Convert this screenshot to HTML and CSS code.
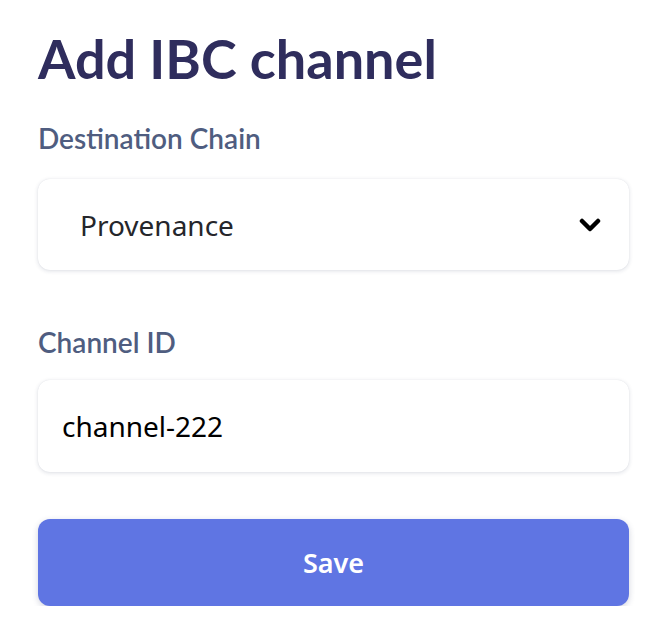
FILE: index.html
```html
<!DOCTYPE html>
<html>
<head>
<meta charset="utf-8">
<link rel="stylesheet" href="styles.css">
</head>
<body>
<main class="form">
  <h1 class="title">Add IBC channel</h1>
  <label class="label">Destination Chain</label>
  <div class="select">
    <span class="select-value">Provenance</span>
    <svg class="chevron" width="22" height="14" viewBox="0 0 22 14"><path d="M3 3 L11 11 L19 3" fill="none" stroke="#000" stroke-width="4.5" stroke-linecap="round" stroke-linejoin="round"/></svg>
  </div>
  <label class="label label-gap">Channel ID</label>
  <div class="input">channel-222</div>
  <button class="save">Save</button>
</main>
</body>
</html>
```
FILE: styles.css
```css
html, body { margin: 0; padding: 0; background: #fff; }
.form {
  width: 591px;
  margin-left: 38px;
  display: flex;
  flex-direction: column;
  font-family: "Lato", "Noto Sans", sans-serif;
}
.title {
  margin: 24px 0 0;
  font-size: 54px;
  font-weight: 700;
  line-height: 70px;
  color: #2f2d5d;
  letter-spacing: 0;
}
.label {
  margin-top: 29px;
  font-size: 28px;
  font-weight: 600;
  line-height: 30px;
  color: #4f5d80;
}
.label-gap { margin-top: 57px; }
.select, .input {
  margin-top: 26px;
  height: 91px;
  box-sizing: border-box;
  border-radius: 12px;
  background: #fff;
  box-shadow: 0 1px 4px rgba(30, 40, 80, 0.15), 0 0 1px rgba(30,40,80,0.1);
  display: flex;
  align-items: center;
  font-family: "Noto Sans", sans-serif;
  font-size: 28px;
}
.select { padding: 0 28px 0 42px; justify-content: space-between; color: #25262b; }
.input { margin-top: 23px; height: 92px; padding-left: 24px; color: #000; }
.chevron { display: block; }
.save {
  margin-top: 47px;
  height: 87px;
  border: none;
  border-radius: 12px;
  background: #5f75e3;
  color: #fff;
  font-family: "Noto Sans", sans-serif;
  font-size: 27px;
  font-weight: 600;
  box-shadow: 0 2px 6px rgba(30, 40, 90, 0.2);
}
```
